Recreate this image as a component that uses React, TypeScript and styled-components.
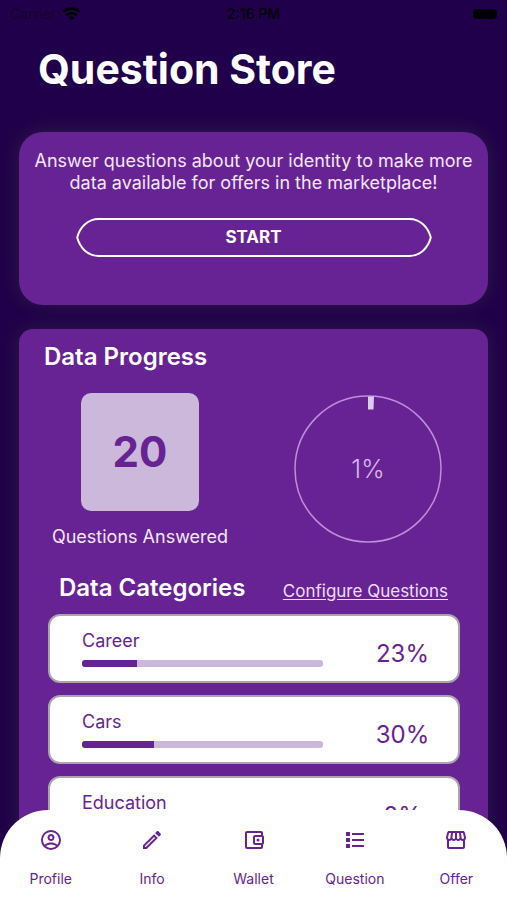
import React from "react";
import styled, { createGlobalStyle } from "styled-components";
import { MdOutlineStorefront } from "react-icons/md";

const violet = "#672394";
const lilac = "#cbb8da";
const night = "#20004a";

const GlobalStyle = createGlobalStyle`
  *, *::before, *::after { box-sizing: border-box; }
  body { margin: 0; background: ${night}; font-family: Inter, "Liberation Sans", sans-serif; }
  h1, h2, p, ul { margin: 0; padding: 0; }
  ul { list-style: none; }
`;

const Screen = styled.div`
  position: relative;
  height: 100vh;
  overflow: hidden;
  display: flex;
  flex-direction: column;
  background: ${night};
  color: #fff;
`;

const StatusBar = styled.div`
  display: grid;
  grid-template-columns: 1fr auto 1fr;
  align-items: center;
  height: 28px;
  padding: 0 10px;
  font-size: 14px;
  line-height: 20px;
  color: #08000f;
`;

const Carrier = styled.span`
  display: flex;
  align-items: center;
  gap: 6px;
  color: #14002c;
`;

const Clock = styled.span`
  font-weight: 600;
`;

const Battery = styled.span`
  justify-self: end;
  width: 24px;
  height: 10px;
  border-radius: 4px;
  background: #000;
`;

const Scroller = styled.main`
  flex: 1;
  min-height: 0;
  overflow-y: auto;
  scrollbar-width: none;
  display: flex;
  flex-direction: column;
  padding: 16px 19px 0;
`;

const Title = styled.h1`
  padding-left: 19px;
  font-size: 41px;
  line-height: 50px;
  font-weight: 700;
`;

const Card = styled.section<{ $radius: number }>`
  flex-shrink: 0;
  border-radius: ${(p) => p.$radius}px;
  background: ${violet};
  box-shadow: 0 0 20px rgba(52, 40, 70, 0.7);
`;

const IntroCard = styled(Card)`
  display: flex;
  flex-direction: column;
  align-items: center;
  gap: 24px;
  margin-top: 38px;
  padding: 18px 12px 48px;
`;

const IntroText = styled.p`
  font-size: 18px;
  line-height: 22px;
  text-align: center;
  color: #f3e6fa;
`;

const StartButton = styled.button`
  display: flex;
  width: 80%;
  height: 39px;
  padding: 0;
  border: 0;
  background: none;
  color: #fff;
  font: 700 17px/35px Inter, "Liberation Sans", sans-serif;
  cursor: pointer;
`;

const StartLabel = styled.span`
  flex: 1;
  border: solid #fff;
  border-width: 2px 0;
`;

const ProgressCard = styled(Card)`
  margin-top: 24px;
  padding: 13px 28px 110px 29px;
`;

const Heading = styled.h2`
  font-size: 24px;
  line-height: 30px;
  font-weight: 600;
`;

const ProgressHeading = styled(Heading)`
  margin-left: -4px;
`;

const Stats = styled.div`
  display: grid;
  grid-template-columns: 184px 1fr;
  align-items: start;
  padding-top: 21px;
`;

const Answered = styled.div`
  display: flex;
  flex-direction: column;
  align-items: center;
  gap: 14px;
  font-size: 18px;
  line-height: 24px;
  white-space: nowrap;
  color: #f3e6fa;
`;

const CountTile = styled.div`
  display: grid;
  place-items: center;
  width: 118px;
  height: 118px;
  border-radius: 10px;
  background: ${lilac};
  color: ${violet};
  font-size: 42px;
  font-weight: 700;
`;

const Dial = styled.svg`
  display: block;
  width: 150px;
  height: 150px;
  justify-self: end;
  margin-right: 17px;
`;

const CategoriesHead = styled.div`
  display: flex;
  justify-content: space-between;
  align-items: flex-end;
  padding: 24px 12px 11px 11px;
`;

const ConfigureLink = styled.a`
  font-size: 17px;
  line-height: 24px;
  color: #f0dcfa;
  text-underline-offset: 2px;
`;

const CategoryList = styled.ul`
  display: flex;
  flex-direction: column;
  gap: 12px;
`;

const CategoryRow = styled.li`
  display: flex;
  align-items: center;
  height: 69px;
  padding: 0 0 2px 32px;
  border: 2px solid #aba3ae;
  border-radius: 12px;
  background: #fff;
  color: ${violet};
`;

const CategoryInfo = styled.div`
  flex: 1;
  display: flex;
  flex-direction: column;
  gap: 7px;
  font-size: 18px;
  line-height: 24px;
`;

const Track = styled.div`
  height: 7px;
  border-radius: 3px;
  overflow: hidden;
  background: ${lilac};
`;

const Fill = styled.div`
  height: 100%;
  background: ${violet};
`;

const Percent = styled.span`
  width: 135px;
  padding: 12px 0 0 24px;
  text-align: center;
  font-size: 24px;
  line-height: 30px;
`;

const TabBar = styled.nav`
  position: absolute;
  inset: auto 0 0;
  display: flex;
  height: 90px;
  border-radius: 48px 48px 0 0;
  background: #fff;
`;

const Tab = styled.button`
  flex: 1 1 0;
  display: flex;
  flex-direction: column;
  align-items: center;
  gap: 17px;
  padding: 18px 0 0;
  border: 0;
  background: none;
  color: ${violet};
  font: 400 14px/20px Inter, "Liberation Sans", sans-serif;
  cursor: pointer;
`;

const icons: Record<string, string> = {
  Profile:
    "M12,2A10,10 0 0,0 2,12A10,10 0 0,0 12,22A10,10 0 0,0 22,12A10,10 0 0,0 12,2M7.07,18.28C7.5,17.38 10.12,16.5 12,16.5C13.88,16.5 16.5,17.38 16.93,18.28C15.57,19.36 13.86,20 12,20C10.14,20 8.43,19.36 7.07,18.28M18.36,16.83C16.93,15.09 13.46,14.5 12,14.5C10.54,14.5 7.07,15.09 5.64,16.83C4.62,15.5 4,13.82 4,12C4,7.59 7.59,4 12,4C16.41,4 20,7.59 20,12C20,13.82 19.38,15.5 18.36,16.83M12,6C10.06,6 8.5,7.56 8.5,9.5C8.5,11.44 10.06,13 12,13C13.94,13 15.5,11.44 15.5,9.5C15.5,7.56 13.94,6 12,6M12,11A1.5,1.5 0 0,1 10.5,9.5A1.5,1.5 0 0,1 12,8A1.5,1.5 0 0,1 13.5,9.5A1.5,1.5 0 0,1 12,11Z",
  Info: "M14.06,9L15,9.94L5.92,19H5V18.08L14.06,9M17.66,3C17.41,3 17.15,3.1 16.96,3.29L15.13,5.12L18.88,8.87L20.71,7.04C21.1,6.65 21.1,6 20.71,5.63L18.37,3.29C18.17,3.09 17.92,3 17.66,3M14.06,6.19L3,17.25V21H6.75L17.81,9.94L14.06,6.19Z",
  Wallet:
    "M5,3C3.89,3 3,3.9 3,5V19A2,2 0 0,0 5,21H19A2,2 0 0,0 21,19V16.72C21.59,16.37 22,15.74 22,15V9C22,8.26 21.59,7.63 21,7.28V5A2,2 0 0,0 19,3H5M5,5H19V7H13A2,2 0 0,0 11,9V15A2,2 0 0,0 13,17H19V19H5V5M13,9H20V15H13V9M16,10.5A1.5,1.5 0 0,0 14.5,12A1.5,1.5 0 0,0 16,13.5A1.5,1.5 0 0,0 17.5,12A1.5,1.5 0 0,0 16,10.5Z",
  Question:
    "M3,4H7V8H3V4M9,5V7H21V5H9M3,10H7V14H3V10M9,11V13H21V11H9M3,16H7V20H3V16M9,17V19H21V17H9",
};

const tabs = ["Profile", "Info", "Wallet", "Question", "Offer"];

const categories = [
  { name: "Career", percent: 23 },
  { name: "Cars", percent: 30 },
  { name: "Education", percent: 0 },
];

function TabIcon({ name }: { name: string }) {
  if (!icons[name]) return <MdOutlineStorefront size={24} aria-hidden />;
  return (
    <svg width="24" height="24" viewBox="0 0 24 24" fill="currentColor" fillRule="evenodd" aria-hidden>
      <path d={icons[name]} />
    </svg>
  );
}

function WifiIcon() {
  return (
    <svg width="19" height="14" viewBox="0 0 19 14" fill="none" stroke="#000" strokeWidth="2.6" aria-hidden>
      <path d="M1 5.2a12 12 0 0 1 17 0M4 8.4a7.8 7.8 0 0 1 11 0" />
      <path d="M9.5 13.5 6.8 10.7a3.8 3.8 0 0 1 5.4 0z" fill="#000" stroke="none" />
    </svg>
  );
}

function ButtonCap({ side }: { side: "left" | "right" }) {
  return (
    <svg width="24" height="39" viewBox="0 0 24 39" fill="none" stroke="#fff" strokeWidth="2" strokeLinejoin="round" aria-hidden>
      <path
        d={
          side === "left"
            ? "M24 1H22.5C12 1 4 9 1.2 19.5C4 30 12 38 22.5 38H24"
            : "M0 1H1.5C12 1 20 9 22.8 19.5C20 30 12 38 1.5 38H0"
        }
      />
    </svg>
  );
}

export default function App() {
  return (
    <Screen>
      <GlobalStyle />
      <StatusBar>
        <Carrier>
          Carrier <WifiIcon />
        </Carrier>
        <Clock>2:16 PM</Clock>
        <Battery />
      </StatusBar>
      <Scroller>
        <Title>Question Store</Title>
        <IntroCard $radius={24}>
          <IntroText>
            Answer questions about your identity to make more data available for offers in the marketplace!
          </IntroText>
          <StartButton type="button">
            <ButtonCap side="left" />
            <StartLabel>START</StartLabel>
            <ButtonCap side="right" />
          </StartButton>
        </IntroCard>
        <ProgressCard $radius={14}>
          <ProgressHeading>Data Progress</ProgressHeading>
          <Stats>
            <Answered>
              <CountTile>20</CountTile>
              <p>Questions Answered</p>
            </Answered>
            <Dial viewBox="0 0 150 150" role="img" aria-label="1% complete">
              <circle cx="75" cy="76" r="73" fill="none" stroke="#bd8fdc" strokeWidth="1.5" />
              <path d="M75 3.5H81L80.5 16.5H75Z" fill="#dccbe9" />
              <text x="75" y="85" textAnchor="middle" fontSize="25" fontWeight="300" fill="#d9b8ee">
                1%
              </text>
            </Dial>
          </Stats>
          <CategoriesHead>
            <Heading>Data Categories</Heading>
            <ConfigureLink href="#configure">Configure Questions</ConfigureLink>
          </CategoriesHead>
          <CategoryList>
            {categories.map((c) => (
              <CategoryRow key={c.name}>
                <CategoryInfo>
                  <span>{c.name}</span>
                  <Track role="progressbar" aria-label={c.name} aria-valuenow={c.percent}>
                    <Fill style={{ width: `${c.percent}%` }} />
                  </Track>
                </CategoryInfo>
                <Percent>{c.percent}%</Percent>
              </CategoryRow>
            ))}
          </CategoryList>
        </ProgressCard>
      </Scroller>
      <TabBar>
        {tabs.map((name) => (
          <Tab key={name} type="button">
            <TabIcon name={name} />
            {name}
          </Tab>
        ))}
      </TabBar>
    </Screen>
  );
}
